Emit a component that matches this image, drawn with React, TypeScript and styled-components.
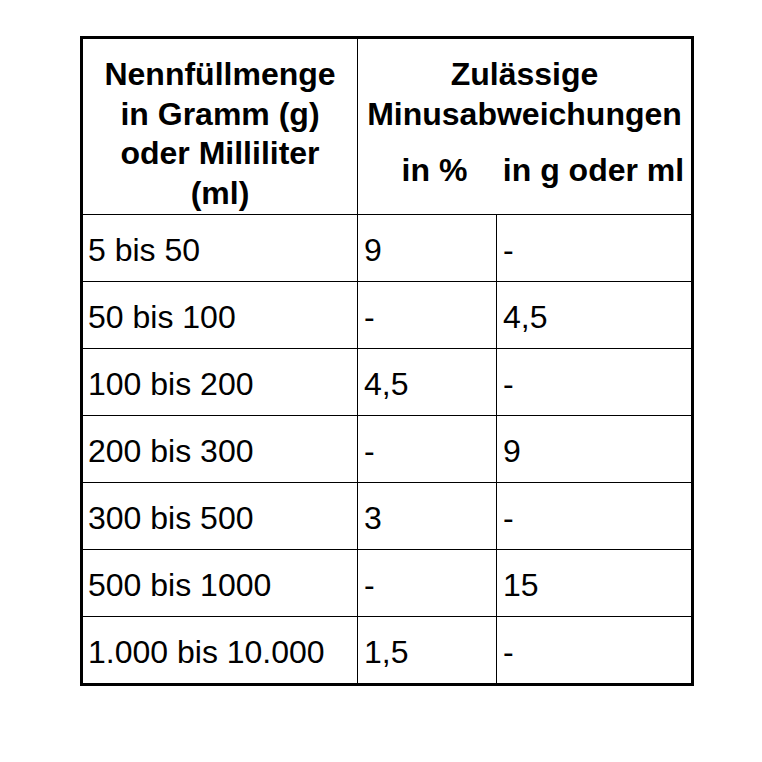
import styled, { createGlobalStyle } from "styled-components";

const GlobalStyle = createGlobalStyle`
    html, body {
        margin: 0;
        padding: 0;
        background: #fff;
    }
    body {
        font-family: "Liberation Sans", Arial, Helvetica, sans-serif;
        color: #000;
    }
`

const rows: [string, string, string][] = [
    ["5 bis 50", "9", "-"],
    ["50 bis 100", "-", "4,5"],
    ["100 bis 200", "4,5", "-"],
    ["200 bis 300", "-", "9"],
    ["300 bis 500", "3", "-"],
    ["500 bis 1000", "-", "15"],
    ["1.000 bis 10.000", "1,5", "-"],
]

const App = () => {
    return (
        <>
            <GlobalStyle />
            <Table>
                <HeadCell>
                    Nennfüllmenge
                    <br />
                    in Gramm (g)
                    <br />
                    oder Milliliter
                    <br />
                    (ml)
                </HeadCell>
                <HeadGroup>
                    <GroupTitle>
                        Zulässige
                        <br />
                        Minusabweichungen
                    </GroupTitle>
                    <SubRow>
                        <SubLabel $shift={15}>in %</SubLabel>
                        <SubLabel>in g oder ml</SubLabel>
                    </SubRow>
                </HeadGroup>
                {rows.map((row, i) =>
                    row.map((value, j) => (
                        <Cell key={`${i}-${j}`} $first={j === 0}>
                            {value}
                        </Cell>
                    ))
                )}
            </Table>
        </>
    )
}

export const Table = styled.div`
    box-sizing: border-box;
    margin: 36px 0 0 80px;
    width: 614px;
    border: 3px solid #000;
    display: grid;
    grid-template-columns: 274px 139px 195px;
    grid-template-rows: 175px repeat(7, 67px);
    font-size: 32px;
`

export const HeadCell = styled.div`
    box-sizing: border-box;
    padding-top: 16px;
    font-weight: 700;
    line-height: 39.5px;
    text-align: center;
`

export const HeadGroup = styled.div`
    grid-column: 2 / 4;
    box-sizing: border-box;
    border-left: 1px solid #000;
    padding-top: 16px;
    font-weight: 700;
    line-height: 39.5px;
`

export const GroupTitle = styled.div`
    text-align: center;
`

export const SubRow = styled.div`
    margin-top: 17px;
    display: grid;
    grid-template-columns: 138px 195px;
`

export const SubLabel = styled.div<{ $shift?: number }>`
    padding-left: ${({ $shift }) => $shift ?? 0}px;
    text-align: center;
    white-space: nowrap;
`

export const Cell = styled.div<{ $first?: boolean }>`
    box-sizing: border-box;
    display: flex;
    align-items: center;
    border-top: 1px solid #000;
    border-left: ${({ $first }) => ($first ? "none" : "1px solid #000")};
    padding: 4px 6px 0 ${({ $first }) => ($first ? 5 : 6)}px;
    white-space: nowrap;
`

export default App;
